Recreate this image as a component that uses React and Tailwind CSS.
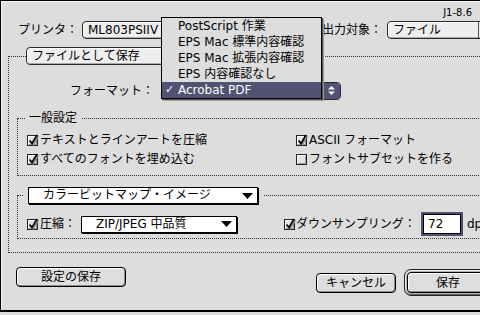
import clsx from "clsx";

const slate = "bg-[#525273]";

function Arrows({ color = "#000" }) {
  return (
    <svg width="7" height="11" viewBox="0 0 7 11">
      <path d="M0 4.5L3.5 1L7 4.5Z" fill={color} />
      <path d="M0 6.5L3.5 10L7 6.5Z" fill={color} />
    </svg>
  );
}

function PlatPopup({ label, className, active }) {
  return (
    <div
      className={clsx(
        "flex h-[18px] shrink-0 overflow-hidden rounded-[4px] border border-[#2a2a2a] bg-[#eeeeee] shadow-[inset_1px_1px_0_#fff,inset_-1px_-1px_0_#aaa]",
        className
      )}
    >
      <span className="flex-1 truncate pl-[5px] leading-[16px]">{label}</span>
      <span
        className={clsx(
          "flex w-[18px] items-center justify-center border-l",
          active ? `${slate} border-[#222]` : "border-[#555]"
        )}
      >
        <Arrows color={active ? "#fff" : "#000"} />
      </span>
    </div>
  );
}

function MenuBox({ label, className }) {
  return (
    <div
      className={clsx(
        "flex h-[17px] shrink-0 items-center border border-black bg-white shadow-[1px_1px_0_#000]",
        className
      )}
    >
      <span className="flex-1 pl-[14px] leading-[15px]">{label}</span>
      <svg width="11" height="6" viewBox="0 0 11 6" className="mr-[4px]">
        <path d="M0 0H11L5.5 6Z" fill="#000" />
      </svg>
    </div>
  );
}

function Check({ on }) {
  return (
    <svg width="12" height="12" viewBox="0 0 12 12" className="shrink-0 overflow-visible">
      <rect x="0.5" y="1.5" width="10" height="10" fill="#e4e4e4" stroke="#222" />
      <path d="M1.5 10V2.5H9.5" stroke="#fff" fill="none" />
      <path d="M2 10.5H9.5V3" stroke="#999" fill="none" />
      {on && (
        <>
          <path d="M3 7l2.5 3L10.5 1.5" stroke="#888" strokeWidth="1.6" fill="none" transform="translate(0.8 0.6)" />
          <path d="M2.5 6.5l2.5 3L10 1" stroke="#000" strokeWidth="1.6" fill="none" />
        </>
      )}
    </svg>
  );
}

function CheckRow({ on, label }) {
  return (
    <div className="flex h-[19px] items-center gap-[1px]">
      <Check on={on} />
      <span>{label}</span>
    </div>
  );
}

function Button({ label, className }) {
  return (
    <div
      className={clsx(
        "flex h-[20px] shrink-0 items-center justify-center rounded-[4px] border border-black bg-[#dedede] shadow-[inset_1px_1px_0_#fff,inset_-1px_-1px_0_#8a8a8a]",
        className
      )}
    >
      {label}
    </div>
  );
}

const menuItems = [
  "PostScript 作業",
  "EPS Mac 標準内容確認",
  "EPS Mac 拡張内容確認",
  "EPS 内容確認なし",
  "Acrobat PDF",
];

export default function App() {
  return (
    <div className="h-[315px] w-[480px] overflow-hidden bg-[#dddddd] font-['DejaVu_Sans','Noto_Sans_CJK_JP',sans-serif] text-[12px] leading-[16px] text-black">
      <div className="relative h-[312px] w-[520px] border-t border-b-2 border-l border-black shadow-[inset_1px_1px_0_#f6f6f6]">
        <div className="flex h-[20px] w-[479px] items-center justify-end pt-[4px] pr-[8px] text-[10px] leading-[12px]">
          J1-8.6
        </div>

        <div className="flex h-[18px] items-center">
          <span className="ml-[17px] w-[60px] shrink-0">プリンタ：</span>
          <PlatPopup className="ml-[4px] w-[232px]" label="ML803PSIIV" />
          <span className="ml-[8px] w-[60px] shrink-0">出力対象：</span>
          <PlatPopup className="ml-[5px] w-[110px]" label="ファイル" />
        </div>

        <fieldset className="mt-[8px] ml-[7px] w-[620px] border border-dotted border-[#333] p-0 pb-[13px]">
          <legend className="ml-[17px] p-0">
            <PlatPopup className="w-[180px]" label="ファイルとして保存" />
          </legend>

          <div className="mt-[17px] flex h-[17px] items-center">
            <span className="ml-[61px] w-[84px] shrink-0">フォーマット：</span>
            <PlatPopup className="ml-[7px] h-[17px] w-[180px]" label="" active />
          </div>

          <fieldset className="mt-[11px] ml-[8px] w-[600px] border border-dotted border-[#333] p-0 pb-[7px]">
            <legend className="ml-[7px] px-[4px]">一般設定</legend>
            <div className="mt-[4px] grid grid-cols-[269px_auto] pl-[9px]">
              <CheckRow on label="テキストとラインアートを圧縮" />
              <CheckRow on label="ASCII フォーマット" />
              <CheckRow on label="すべてのフォントを埋め込む" />
              <CheckRow label="フォントサブセットを作る" />
            </div>
          </fieldset>

          <fieldset className="mt-[11px] ml-[8px] w-[600px] border border-dotted border-[#333] p-0 pb-[2px]">
            <legend className="ml-[5px] px-[5px]">
              <MenuBox className="w-[230px]" label="カラービットマップ・イメージ" />
            </legend>
            <div className="mt-[8px] flex h-[24px] items-center pl-[9px]">
              <Check on />
              <span className="ml-[1px] w-[36px] shrink-0">圧縮：</span>
              <MenuBox className="ml-[5px] w-[156px]" label="ZIP/JPEG 中品質" />
              <span className="ml-[47px]">
                <Check on />
              </span>
              <span className="w-[125px] shrink-0">ダウンサンプリング：</span>
              <div className="h-[24px] w-[42px] shrink-0 border-2 border-[#50506e]">
                <div className="h-full border border-black bg-white pl-[4px] leading-[18px]">72</div>
              </div>
              <span className="ml-[4px]">dpi</span>
            </div>
          </fieldset>
        </fieldset>

        <div className="flex items-start">
          <Button className="mt-[14px] ml-[15px] w-[110px]" label="設定の保存" />
          <Button className="mt-[20px] ml-[190px] w-[80px]" label="キャンセル" />
          <div className="mt-[16px] ml-[8px] shrink-0 rounded-[7px] border border-[#222] bg-[#b4b4b4] p-[2px] shadow-[inset_1px_1px_0_#eee,inset_-1px_-1px_0_#666]">
            <Button className="h-[21px] w-[82px]" label="保存" />
          </div>
        </div>

        <div className="absolute top-[16px] left-[160px] h-[82px] w-[161px] border border-black bg-[#dddddd] shadow-[1px_1px_0_#555,2px_2px_0_#999]">
          {menuItems.map((item, i) => {
            const sel = i === menuItems.length - 1;
            return (
              <div
                key={item}
                className={clsx(
                  "flex h-[16px] items-center",
                  sel ? `${slate} text-white` : ""
                )}
              >
                <span className="w-[16px] pl-[3px] text-[11px]">{sel ? "✓" : ""}</span>
                <span>{item}</span>
              </div>
            );
          })}
        </div>
      </div>
    </div>
  );
}
